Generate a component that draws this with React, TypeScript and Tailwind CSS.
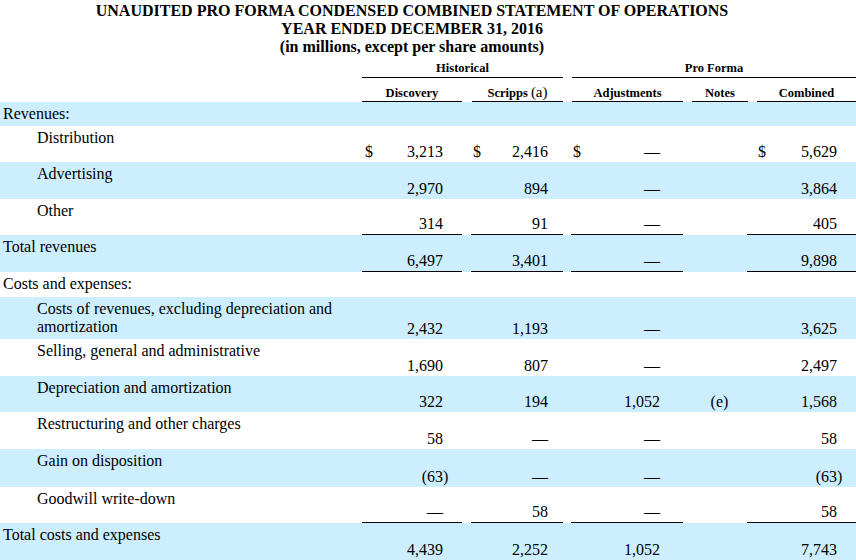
import React from "react";

const GRID = "grid grid-cols-[362px_100px_9px_92px_8px_112px_64px_109px]";

type Row = {
  label: React.ReactNode;
  indent?: boolean;
  h: string;
  blue?: boolean;
  d?: React.ReactNode;
  s?: React.ReactNode;
  a?: React.ReactNode;
  n?: React.ReactNode;
  c?: React.ReactNode;
  dollar?: boolean;
  line?: boolean;
  section?: boolean;
};

const neg = (v: string) => (
  <>
    ({v}
    <span className="inline-block w-0">)</span>
  </>
);

const rows: Row[] = [
  { label: "Revenues:", h: "h-[24px]", blue: true, section: true },
  { label: "Distribution", indent: true, h: "h-[36px]", d: "3,213", s: "2,416", a: "—", c: "5,629", dollar: true },
  { label: "Advertising", indent: true, h: "h-[37px]", blue: true, d: "2,970", s: "894", a: "—", c: "3,864" },
  { label: "Other", indent: true, h: "h-[36px]", d: "314", s: "91", a: "—", c: "405", line: true },
  { label: "Total revenues", h: "h-[37px]", blue: true, d: "6,497", s: "3,401", a: "—", c: "9,898", line: true },
  { label: "Costs and expenses:", h: "h-[25px]", section: true },
  {
    label: (
      <>
        Costs of revenues, excluding depreciation and
        <br />
        amortization
      </>
    ),
    indent: true,
    h: "h-[42px]",
    blue: true,
    d: "2,432",
    s: "1,193",
    a: "—",
    c: "3,625",
  },
  { label: "Selling, general and administrative", indent: true, h: "h-[37px]", d: "1,690", s: "807", a: "—", c: "2,497" },
  { label: "Depreciation and amortization", indent: true, h: "h-[36px]", blue: true, d: "322", s: "194", a: "1,052", n: "(e)", c: "1,568" },
  { label: "Restructuring and other charges", indent: true, h: "h-[37px]", d: "58", s: "—", a: "—", c: "58" },
  { label: "Gain on disposition", indent: true, h: "h-[38px]", blue: true, d: neg("63"), s: "—", a: "—", c: neg("63") },
  { label: "Goodwill write-down", indent: true, h: "h-[36px]", d: "—", s: "58", a: "—", c: "58", line: true },
  { label: "Total costs and expenses", h: "h-[37px]", blue: true, d: "4,439", s: "2,252", a: "1,052", c: "7,743" },
];

function NumCell({
  v,
  dollar,
  line,
  pl,
  pr,
}: {
  v?: React.ReactNode;
  dollar?: boolean;
  line?: boolean;
  pl: string;
  pr: string;
}) {
  return (
    <div
      className={`flex items-end justify-between pb-[1px] leading-[18px] ${pl} ${pr} ${
        line ? "border-b border-black" : ""
      }`}
    >
      <span>{dollar ? "$" : ""}</span>
      <span className="whitespace-nowrap">{v}</span>
    </div>
  );
}

export default function App() {
  return (
    <div
      className="w-[856px] h-[560px] overflow-hidden bg-white text-black"
      style={{ fontFamily: '"Liberation Serif", "Times New Roman", serif' }}
    >
      <div className="w-[824px] pt-[2px] text-center font-bold text-[16px] leading-[18px]">
        <div>UNAUDITED PRO FORMA CONDENSED COMBINED STATEMENT OF OPERATIONS</div>
        <div>YEAR ENDED DECEMBER 31, 2016</div>
        <div>(in millions, except per share amounts)</div>
      </div>

      {/* header row A */}
      <div className={`${GRID} h-[22px] font-bold text-[12.5px] leading-[15px]`}>
        <div />
        <div className="col-span-3 flex items-end justify-center border-b border-black pb-[1px]">Historical</div>
        <div />
        <div className="col-span-3 ml-[1px] flex items-end justify-center border-b border-black pb-[1px]">Pro Forma</div>
      </div>

      {/* header row B */}
      <div className={`${GRID} h-[24px] font-bold text-[12.5px] leading-[15px]`}>
        <div />
        <div className="flex items-end justify-center border-b border-black">Discovery</div>
        <div />
        <div className="ml-[1px] flex items-end justify-center border-b border-black">
          <span>
            Scripps <span className="font-normal text-[15px] leading-[15px]">(a)</span>
          </span>
        </div>
        <div />
        <div className="ml-[1px] flex items-end justify-center border-b border-black">Adjustments</div>
        <div className="ml-[9px] mr-[-1px] flex items-end justify-center border-b border-black">Notes</div>
        <div className="ml-[10px] flex items-end justify-center border-b border-black">Combined</div>
      </div>

      {/* body */}
      <div className="text-[16px]">
        {rows.map((r, i) => (
          <div key={i} className={`${GRID} ${r.h} ${r.blue ? "bg-[#cceeff]" : "bg-white"}`}>
            <div className={`pt-[3px] leading-[18px] whitespace-nowrap ${r.indent ? "pl-[37px]" : "pl-[3px]"}`}>
              {r.label}
            </div>
            {r.section ? (
              <div className="col-span-7" />
            ) : (
              <>
                <NumCell v={r.d} dollar={r.dollar} line={r.line} pl="pl-[3px]" pr="pr-[19px]" />
                <div />
                <NumCell v={r.s} dollar={r.dollar} line={r.line} pl="pl-[2px]" pr="pr-[15px]" />
                <div />
                <NumCell v={r.a} dollar={r.dollar} line={r.line} pl="pl-[2px]" pr="pr-[23px]" />
                <div className="flex items-end justify-center pl-[9px] pb-[1px] leading-[18px]">{r.n}</div>
                <NumCell v={r.c} dollar={r.dollar} line={r.line} pl="pl-[11px]" pr="pr-[19px]" />
              </>
            )}
          </div>
        ))}
      </div>
    </div>
  );
}
